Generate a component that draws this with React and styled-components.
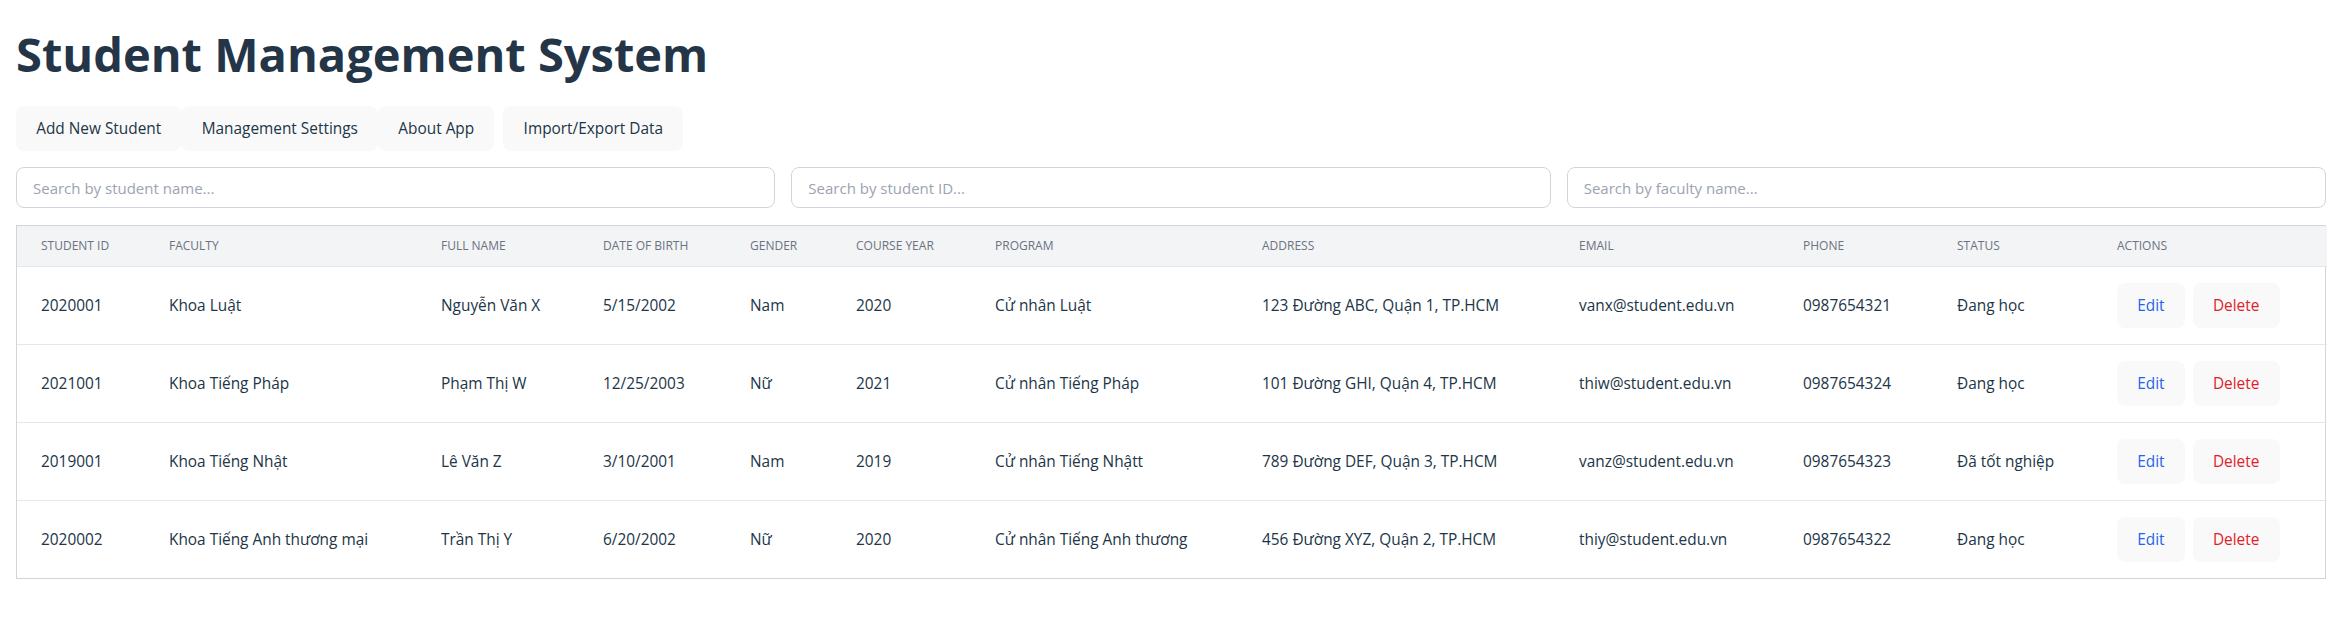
import React from "react";
import styled, { createGlobalStyle } from "styled-components";

const GlobalStyle = createGlobalStyle`
  * { box-sizing: border-box; }
  body {
    margin: 0;
    background: #ffffff;
    color: #213547;
    font-family: "Open Sans", "Noto Sans", "Liberation Sans", sans-serif;
    font-size: 16px;
    line-height: 1.5;
  }
`;

const Page = styled.div`
  padding: 16px;
`;

const Title = styled.h1`
  margin: 10px 0 24px;
  font-size: 47px;
  line-height: 1.2;
  font-weight: 700;
  color: #243548;
`;

const Toolbar = styled.div`
  display: flex;
  align-items: center;
`;

const Button = styled.button`
  font-family: inherit;
  font-size: 15.4px;
  line-height: 24px;
  font-weight: 400;
  padding: 9.5px 19.2px;
  border-radius: 8px;
  border: 1px solid transparent;
  background: #f9f9f9;
  color: ${(p) => p.$color || "#213547"};
  cursor: pointer;
  margin-left: ${(p) => (p.$spaced ? "9px" : "0")};
`;

const SearchRow = styled.div`
  display: grid;
  grid-template-columns: repeat(3, 1fr);
  gap: 16px;
  margin: 16px 0 17px;
`;

const SearchInput = styled.input`
  height: 41px;
  padding: 0 16px;
  border: 1px solid #d1d5db;
  border-radius: 8px;
  font-family: inherit;
  font-size: 15px;
  color: #213547;
  background: #fff;
  outline: none;
  &::placeholder { color: #9ca3af; }
`;

const TableWrap = styled.div`
  border: 1px solid #d1d5db;
`;

const Table = styled.table`
  width: 100%;
  border-collapse: collapse;
  table-layout: fixed;
`;

const Col = styled.col`
  width: ${(p) => p.$w}px;
`;

const HeadRow = styled.tr`
  background: #f3f4f6;
`;

const Th = styled.th`
  text-align: left;
  font-weight: 400;
  font-size: 12px;
  line-height: 18px;
  text-transform: uppercase;
  color: #6b7280;
  padding: 11px 24px;
  white-space: nowrap;
`;

const Row = styled.tr`
  border-top: 1px solid #e5e7eb;
`;

const Td = styled.td`
  padding: 16px 24px;
  font-size: 15.4px;
  line-height: 24px;
  color: #213547;
  vertical-align: middle;
  white-space: nowrap;
`;

const Actions = styled.div`
  display: flex;
  gap: 8px;
`;

const columns = [
  ["Student ID", 128],
  ["Faculty", 272],
  ["Full Name", 162],
  ["Date of Birth", 147],
  ["Gender", 106],
  ["Course Year", 139],
  ["Program", 267],
  ["Address", 317],
  ["Email", 224],
  ["Phone", 154],
  ["Status", 160],
  ["Actions", 234],
];

const students = [
  ["2020001", "Khoa Luật", "Nguyễn Văn X", "5/15/2002", "Nam", "2020", "Cử nhân Luật", "123 Đường ABC, Quận 1, TP.HCM", "vanx@student.edu.vn", "0987654321", "Đang học"],
  ["2021001", "Khoa Tiếng Pháp", "Phạm Thị W", "12/25/2003", "Nữ", "2021", "Cử nhân Tiếng Pháp", "101 Đường GHI, Quận 4, TP.HCM", "thiw@student.edu.vn", "0987654324", "Đang học"],
  ["2019001", "Khoa Tiếng Nhật", "Lê Văn Z", "3/10/2001", "Nam", "2019", "Cử nhân Tiếng Nhậtt", "789 Đường DEF, Quận 3, TP.HCM", "vanz@student.edu.vn", "0987654323", "Đã tốt nghiệp"],
  ["2020002", "Khoa Tiếng Anh thương mại", "Trần Thị Y", "6/20/2002", "Nữ", "2020", "Cử nhân Tiếng Anh thương", "456 Đường XYZ, Quận 2, TP.HCM", "thiy@student.edu.vn", "0987654322", "Đang học"],
];

export default function App() {
  return (
    <>
      <GlobalStyle />
      <Page>
        <Title>Student Management System</Title>
        <Toolbar>
          <Button>Add New Student</Button>
          <Button>Management Settings</Button>
          <Button>About App</Button>
          <Button $spaced>Import/Export Data</Button>
        </Toolbar>
        <SearchRow>
          <SearchInput placeholder="Search by student name..." />
          <SearchInput placeholder="Search by student ID..." />
          <SearchInput placeholder="Search by faculty name..." />
        </SearchRow>
        <TableWrap>
          <Table>
            <colgroup>
              {columns.map(([name, w]) => (
                <Col key={name} $w={w} />
              ))}
            </colgroup>
            <thead>
              <HeadRow>
                {columns.map(([name]) => (
                  <Th key={name}>{name}</Th>
                ))}
              </HeadRow>
            </thead>
            <tbody>
              {students.map((s) => (
                <Row key={s[0]}>
                  {s.map((v, i) => (
                    <Td key={i}>{v}</Td>
                  ))}
                  <Td>
                    <Actions>
                      <Button $color="#2563eb">Edit</Button>
                      <Button $color="#e11d2a">Delete</Button>
                    </Actions>
                  </Td>
                </Row>
              ))}
            </tbody>
          </Table>
        </TableWrap>
      </Page>
    </>
  );
}
